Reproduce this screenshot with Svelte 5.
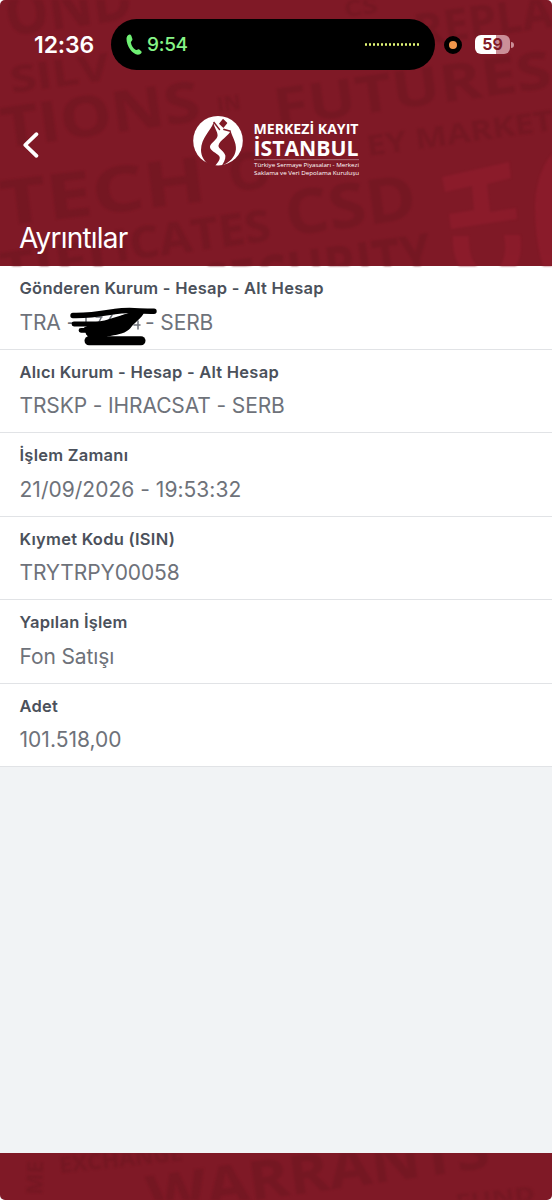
<!-- App.svelte -->
<script>
    const details = [
        { label: 'Gönderen Kurum - Hesap - Alt Hesap', value: 'TRA -', tail: '- SERB' },
        { label: 'Alıcı Kurum - Hesap - Alt Hesap', value: 'TRSKP - IHRACSAT - SERB' },
        { label: 'İşlem Zamanı', value: '21/09/2026 - 19:53:32', numeric: true },
        { label: 'Kıymet Kodu (ISIN)', value: 'TRYTRPY00058' },
        { label: 'Yapılan İşlem', value: 'Fon Satışı' },
        { label: 'Adet', value: '101.518,00', numeric: true }
    ];

    // Words printed into the brand backdrop
    const headerWords = [
        { text: 'OND', x: 8, y: 36, size: 60, width: 128, angle: -8 },
        { text: 'REPLA', x: 416, y: 46, size: 44, width: 140, angle: -8 },
        { text: 'CS', x: 345, y: 17, size: 22, width: 34, angle: -8 },
        { text: 'SILV', x: 12, y: 93, size: 37, width: 100, angle: -8 },
        { text: 'TIONS', x: 4, y: 148, size: 56, width: 200, angle: -8 },
        { text: 'IN', x: 218, y: 112, size: 20, width: 24, angle: -8 },
        { text: 'FUTURES', x: 276, y: 126, size: 52, width: 280, angle: -8 },
        { text: 'EY MARKET', x: 368, y: 156, size: 28, width: 188, angle: -8 },
        { text: 'TECH', x: 2, y: 226, size: 63, width: 208, angle: -7 },
        { text: 'O', x: 230, y: 192, size: 52, width: 44, angle: -7 },
        { text: 'CSD', x: 288, y: 236, size: 62, width: 132, angle: -8 },
        { text: 'ICATES', x: 116, y: 262, size: 44, width: 158, angle: -8 },
        { text: 'TIFI', x: 2, y: 286, size: 46, width: 108, angle: -8 },
        { text: 'SECURITY', x: 206, y: 306, size: 58, width: 230, angle: -8 }
    ];

    const footerWords = [
        { text: 'EXCHANGE', x: 60, y: 20, size: 22, width: 124, angle: -6 },
        { text: 'WARRANTS', x: 150, y: 62, size: 54, width: 345, angle: -8 },
        { text: 'FUND', x: 456, y: 56, size: 20, width: 80, angle: -6 },
        { text: 'ME', x: 42, y: 42, size: 22, width: 34, angle: -88 }
    ];

    const levels = Array.from({ length: 14 }, (_, i) => i);
</script>

{#snippet backdrop(words)}
    {#each words as w}
        <text
            transform="translate({w.x} {w.y}) rotate({w.angle})"
            font-size={w.size}
            textLength={w.width}
            lengthAdjust="spacingAndGlyphs">{w.text}</text>
    {/each}
{/snippet}

<div class="screen">
    <header class="header">
        <svg class="backdrop" viewBox="0 0 552 266" aria-hidden="true">
            {@render backdrop(headerWords)}
            <g class="bright">
                <path d="M442 177 509 162 511 178 487 184 490 212 516 208 517 219 451 229 449 214 474 210 472 186 445 192z" />
                <path d="M453 236h16q-1 21 8 30h-18q-7-13-6-30zM504 235h16q3 19-4 31h-16q8-12 4-31z" />
                <path d="M552 154q-15 18-17 50 0 37 8 62h9z" />
            </g>
        </svg>

        <div class="status-bar">
            <span class="clock">12:36</span>
            <div class="island">
                <svg class="phone" width="16" height="22" viewBox="0 0 16 22">
                    <path d="M2 1.3C3.4.1 4.9.5 5.5 2.2L6.4 5.1C6.8 6.5 4.7 7.3 4.9 8.5 5.3 11.4 7.2 14.2 9.5 15.8 10.6 16.5 11.8 14.6 13 15.3L15 17C16.3 18.2 15.4 19.5 14 20.2 10.7 21.7 6.7 19.2 4.2 15.6 1.6 11.9.1 6.8.6 3.8.8 2.7 1.3 1.9 2 1.3z" />
                </svg>
                <span class="call-time">9:54</span>
                <span class="levels">
                    {#each levels as level (level)}
                        <i></i>
                    {/each}
                </span>
            </div>
            <span class="mic"></span>
            <span class="battery"><b>59</b></span>
            <span class="battery-cap"></span>
        </div>

        <div class="nav">
            <button class="back" aria-label="Geri">
                <svg width="18" height="28" viewBox="0 0 18 28">
                    <path d="M14.5 3.2 3.2 14 14.5 24.8" />
                </svg>
            </button>
            <svg class="logo" width="170" height="66" viewBox="0 0 170 66">
                <circle cx="26" cy="26.7" r="24.8" fill="#fff" />
                <g fill="#7f1926">
                    <path d="M21.6 8.5C18.4 17 9.2 24 9 36 9 42.5 12.4 47.4 18.4 52.4L23 52C25.5 48.8 29 45 27.3 42.3 25 39.4 17.4 36.4 18 32.6 18.7 28.6 25.4 26 25.6 21.6 25.7 17 22 14 21.6 8.5z" />
                    <path d="M38.6 16.5C37.3 21.6 27.5 26.2 26.5 31.4 26 34.6 33 37.6 33.4 41.8 33.7 45.6 31.4 49 29.5 52 37.5 48.5 43 43.5 43.9 35.5 44.6 28.4 39.8 22.4 38.6 16.5z" />
                    <path d="M31 4.8 35.4 9.1 31.4 13.9 27 9.7z" />
                    <path d="M21 8.6 27.4 16.4 28.4 15.6 22.2 7.4z" />
                    <path d="M31.6 14.6 38.8 16.4 38.4 18 31 16z" />
                </g>
                <g fill="#fff">
                    <text class="brand" x="61.5" y="20" font-size="14.5" textLength="105" lengthAdjust="spacingAndGlyphs">MERKEZİ KAYIT</text>
                    <text class="brand" x="61.5" y="41.6" font-size="22" textLength="105" lengthAdjust="spacingAndGlyphs">İSTANBUL</text>
                    <rect x="62" y="45.4" width="105" height="0.7" opacity="0.5" />
                    <text class="tagline" x="62" y="53.2" textLength="105" lengthAdjust="spacingAndGlyphs">Türkiye Sermaye Piyasaları - Merkezi</text>
                    <text class="tagline" x="62" y="61.4" textLength="105" lengthAdjust="spacingAndGlyphs">Saklama ve Veri Depolama Kuruluşu</text>
                </g>
            </svg>
        </div>

        <h1 class="title">Ayrıntılar</h1>
    </header>

    <main class="details">
        {#each details as row}
            <section class="row">
                <h2 class="label">{row.label}</h2>
                <p class="value" class:numeric={row.numeric}>
                    <span>{row.value}</span>
                    {#if row.tail}
                        <span class="tail">{row.tail}</span>
                        <!-- Marker strokes over the account number -->
                        <svg class="scribble" width="90" height="42" viewBox="0 0 90 42" aria-hidden="true">
                            <path class="digits" d="M19 11v6M29 11h6M34 12l-2 4M45 9l-3 5M67 19h6M71 15v8" />
                            <path d="M6 9.5C21 10 34 7.7 48 5.5 62 3.3 71 5.3 87 5.3" stroke-width="5.4" />
                            <path d="M7 18H29C42 18 50 12 63 9.5M14 24.3H30" stroke-width="4.8" />
                            <path class="fill" d="M18 22C24 18 40 18 48 14 57 9 69 5 76 6.5 74 12 67 15 63 21 58 27 48 28 40 29.5 32 31.5 24 32 20 28z" />
                            <path d="M22 34.8H74" stroke-width="9" />
                            <path d="M23 29 38 32" stroke-width="5" />
                        </svg>
                    {/if}
                </p>
            </section>
        {/each}
    </main>

    <footer class="footer">
        <svg class="backdrop" viewBox="0 0 552 47" aria-hidden="true">
            {@render backdrop(footerWords)}
        </svg>
    </footer>
</div>

<style>
    :global(body) {
        background: #fff;
    }

    .screen {
        width: 552px;
        height: 1200px;
        display: flex;
        flex-direction: column;
        overflow: hidden;
        border-radius: 5px;
        background: #f1f3f5;
        font-family: Inter, "Liberation Sans", sans-serif;
    }

    /* Header */
    .header {
        position: relative;
        height: 266px;
        flex-shrink: 0;
        background: #7f1926;
        color: #fff;
    }
    .backdrop {
        position: absolute;
        inset: 0;
        width: 100%;
        height: 100%;
        fill: #731722;
        font-family: "Open Sans", "Noto Sans", sans-serif;
        font-weight: 700;
        opacity: 0.8;
        filter: blur(0.9px);
    }
    .bright {
        fill: #8e1c2c;
    }

    /* Status bar */
    .status-bar {
        position: relative;
        display: flex;
        align-items: center;
        height: 51px;
        padding-top: 19px;
    }
    .clock {
        width: 77px;
        padding-left: 34px;
        font-size: 23px;
        font-weight: 600;
        letter-spacing: -0.1px;
    }
    .island {
        display: flex;
        align-items: center;
        width: 324px;
        height: 51px;
        box-sizing: border-box;
        padding: 0 16px 0 15px;
        border-radius: 26px;
        background: #000;
    }
    .phone {
        fill: #6ff074;
    }
    .call-time {
        margin-left: 5px;
        color: #86f487;
        font-size: 19px;
        font-weight: 500;
        letter-spacing: -0.3px;
    }
    .levels {
        display: flex;
        gap: 2px;
        margin-left: auto;
    }
    .levels i {
        width: 2px;
        height: 2.4px;
        border-radius: 1px;
        background: #e5f877;
    }
    .mic {
        width: 8px;
        height: 8px;
        margin-left: 9px;
        border: 5px solid #000;
        border-radius: 50%;
        background: #ef964b;
    }
    .battery {
        width: 35px;
        height: 19px;
        margin-left: 13px;
        border-radius: 6px;
        background: linear-gradient(90deg, #fff 59%, #cb8f98 59%);
        color: #7f1926;
        font-size: 16px;
        line-height: 19px;
        text-align: center;
    }
    .battery-cap {
        width: 2.5px;
        height: 6px;
        margin-left: 1px;
        border-radius: 0 3px 3px 0;
        background: #cb8f98;
    }

    /* Navigation */
    .nav {
        position: relative;
        display: flex;
        align-items: flex-start;
        padding: 44px 0 0 22px;
    }
    .back {
        margin-top: 17px;
        padding: 0;
        border: none;
        background: none;
        line-height: 0;
        cursor: pointer;
    }
    .back path {
        fill: none;
        stroke: #fff;
        stroke-width: 3.8;
        stroke-linecap: round;
        stroke-linejoin: round;
    }
    .logo {
        margin-left: 152px;
    }
    .brand {
        font-family: "Open Sans", sans-serif;
        font-weight: 700;
    }
    .tagline {
        font-family: "Open Sans", sans-serif;
        font-size: 6px;
    }
    .title {
        position: relative;
        margin: 41px 0 0 19px;
        font-size: 28px;
        font-weight: 400;
        line-height: 34px;
        letter-spacing: -0.8px;
    }

    /* Detail rows */
    .row {
        height: 83.5px;
        box-sizing: border-box;
        padding: 12px 20px 0 19.5px;
        border-bottom: 1.5px solid #e1e3e6;
        background: #fff;
    }
    .label {
        margin: 0;
        color: #4b515b;
        font-size: 16.5px;
        font-weight: 600;
        line-height: 20px;
        letter-spacing: 0.25px;
    }
    .value {
        position: relative;
        display: flex;
        margin: 13.5px 0 0;
        color: #6e727a;
        font-size: 21px;
        line-height: 22px;
        letter-spacing: -0.12px;
    }
    .value.numeric {
        letter-spacing: 0.02px;
    }
    .tail {
        margin-left: 69px;
    }
    .scribble {
        position: absolute;
        left: 47px;
        top: -5.5px;
        fill: none;
        stroke: #000;
        stroke-linecap: round;
        stroke-linejoin: round;
    }
    .scribble .digits {
        stroke: #6e727a;
        stroke-width: 1.5;
    }
    .scribble .fill {
        fill: #000;
        stroke-width: 2;
    }

    /* Bottom strip */
    .footer {
        position: relative;
        height: 47px;
        margin-top: auto;
        flex-shrink: 0;
        overflow: hidden;
        background: #7f1926;
    }
</style>
